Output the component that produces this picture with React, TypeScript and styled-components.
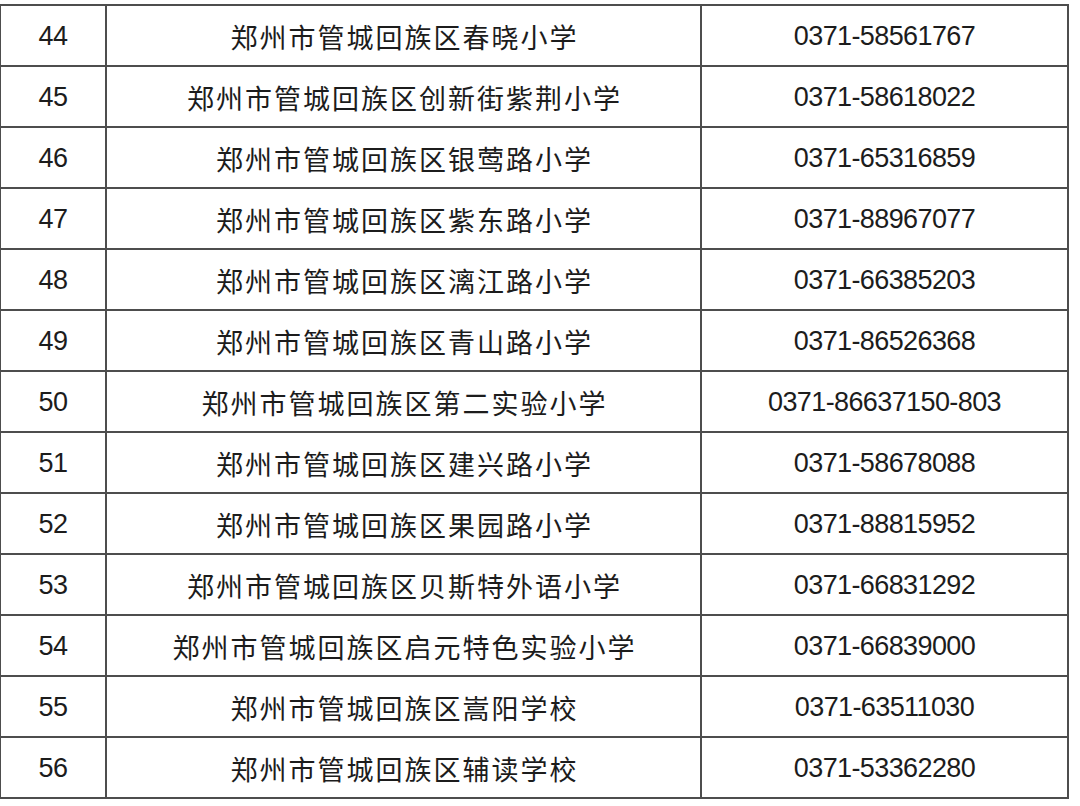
import React from "react";
import styled, { createGlobalStyle } from "styled-components";

const GlobalStyle = createGlobalStyle`
  html, body {
    margin: 0;
    padding: 0;
    background: #fff;
  }
`;

const Page = styled.div`
  width: 1080px;
  height: 806px;
  overflow: hidden;
  background: #fff;
  padding-top: 4px;
  box-sizing: border-box;
`;

const Table = styled.table`
  border-collapse: collapse;
  margin-left: -1px;
  table-layout: fixed;
  color: #1c1c1c;
`;

const Row = styled.tr`
  height: 61px;
`;

const Cell = styled.td<{ $w: number; $cjk?: boolean }>`
  width: ${(p) => p.$w}px;
  border: 2px solid #4d4d4d;
  padding: 2px 0 0;
  text-align: center;
  vertical-align: middle;
  white-space: nowrap;
  font-family: ${(p) =>
    p.$cjk
      ? `"Noto Sans CJK SC", "Liberation Sans", sans-serif`
      : `"Liberation Sans", Arial, sans-serif`};
  font-size: 27px;
  letter-spacing: ${(p) => (p.$cjk ? "2px" : "-0.6px")};
  text-indent: ${(p) => (p.$cjk ? "2px" : "0")};
  line-height: 1;
`;

const rows: [string, string, string][] = [
  ["44", "郑州市管城回族区春晓小学", "0371-58561767"],
  ["45", "郑州市管城回族区创新街紫荆小学", "0371-58618022"],
  ["46", "郑州市管城回族区银莺路小学", "0371-65316859"],
  ["47", "郑州市管城回族区紫东路小学", "0371-88967077"],
  ["48", "郑州市管城回族区漓江路小学", "0371-66385203"],
  ["49", "郑州市管城回族区青山路小学", "0371-86526368"],
  ["50", "郑州市管城回族区第二实验小学", "0371-86637150-803"],
  ["51", "郑州市管城回族区建兴路小学", "0371-58678088"],
  ["52", "郑州市管城回族区果园路小学", "0371-88815952"],
  ["53", "郑州市管城回族区贝斯特外语小学", "0371-66831292"],
  ["54", "郑州市管城回族区启元特色实验小学", "0371-66839000"],
  ["55", "郑州市管城回族区嵩阳学校", "0371-63511030"],
  ["56", "郑州市管城回族区辅读学校", "0371-53362280"],
];

export default function App() {
  return (
    <Page>
      <GlobalStyle />
      <Table>
        <tbody>
          {rows.map(([no, name, tel]) => (
            <Row key={no}>
              <Cell $w={104}>{no}</Cell>
              <Cell $w={593} $cjk>
                {name}
              </Cell>
              <Cell $w={365}>{tel}</Cell>
            </Row>
          ))}
        </tbody>
      </Table>
    </Page>
  );
}
